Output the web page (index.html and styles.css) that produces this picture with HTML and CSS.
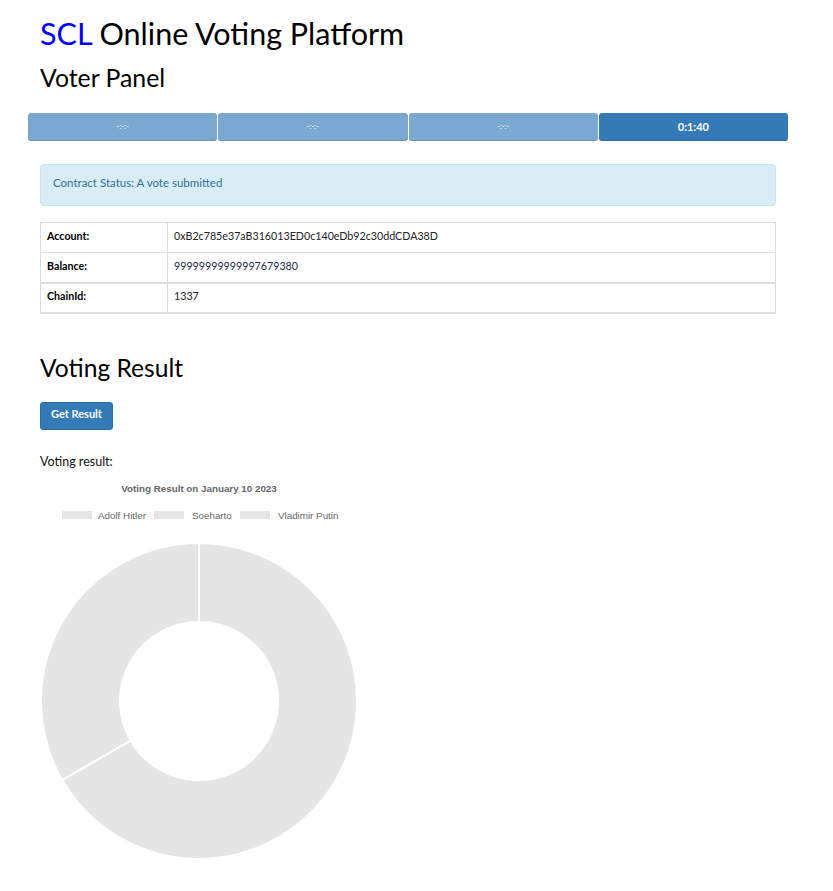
FILE: index.html
```html
<!DOCTYPE html>
<html>
<head>
<meta charset="utf-8">
<link rel="stylesheet" href="styles.css">
</head>
<body>
<div class="container">
  <h1 class="title"><span class="brand">SCL</span> Online Voting Platform</h1>
  <h2 class="subtitle">Voter Panel</h2>

  <div class="progress">
    <div class="seg light">-:-:-</div>
    <div class="seg light">-:-:-</div>
    <div class="seg light">-:-:-</div>
    <div class="seg dark">0:1:40</div>
  </div>

  <div class="alert">Contract Status: A vote submitted</div>

  <table class="info">
    <tbody>
      <tr><th>Account:</th><td>0xB2c785e37aB316013ED0c140eDb92c30ddCDA38D</td></tr>
      <tr><th>Balance:</th><td class="navy">99999999999997679380</td></tr>
    </tbody>
    <tbody class="second">
      <tr><th>ChainId:</th><td>1337</td></tr>
    </tbody>
  </table>

  <h2 class="section">Voting Result</h2>
  <button class="btn">Get Result</button>
  <p class="label">Voting result:</p>

  <svg class="chart" width="318" height="400" viewBox="0 0 318 400">
    <text x="159" y="13" class="ctitle" text-anchor="middle">Voting Result on January 10 2023</text>
    <rect x="22" y="32" width="30" height="8" class="box"/>
    <text x="58" y="39.5" class="ltext">Adolf Hitler</text>
    <rect x="114" y="32" width="30" height="8" class="box"/>
    <text x="152" y="39.5" class="ltext">Soeharto</text>
    <rect x="200" y="32" width="30" height="8" class="box"/>
    <text x="238" y="39.5" class="ltext">Vladimir Putin</text>
    <path class="slice" d="M159 64 A158 158 0 1 1 22.2 301 L90.6 261.5 A79 79 0 1 0 159 143 Z"/>
    <path class="slice" d="M22.2 301 A158 158 0 0 1 159 64 L159 143 A79 79 0 0 0 90.6 261.5 Z"/>
  </svg>
</div>
</body>
</html>
```

FILE: styles.css
```css
html, body {
  margin: 0;
  padding: 0;
  background: #fff;
}
body {
  font-family: Lato, "Open Sans", sans-serif;
  color: #111;
}
.container {
  width: 736px;
  margin-left: 40px;
}
.title {
  font-weight: 400;
  font-size: 30.5px;
  line-height: 36px;
  margin: 15px 0 0 0;
  color: #000;
}
.brand {
  color: #0000ff;
}
.subtitle {
  font-weight: 400;
  font-size: 24.8px;
  line-height: 30px;
  margin: 12px 0 0 0;
  color: #000;
}
.progress {
  display: flex;
  margin: 20px -12px 0 -12px;
  height: 28px;
}
.seg {
  flex: 1;
  display: flex;
  align-items: center;
  justify-content: center;
  color: #fff;
  font-size: 11px;
  border-radius: 3px;
  box-shadow: inset 0 -1px 0 rgba(0,0,0,0.12);
  margin-right: 1px;
  padding-bottom: 2px;
  box-sizing: border-box;
}
.seg:last-child { margin-right: 0; }
.light {
  background: #7ba8d0;
  font-size: 8px;
}
.dark {
  background: #337ab7;
  font-weight: 700;
}
.alert {
  margin-top: 23px;
  background: #d9edf7;
  border: 1px solid #bce8f1;
  border-radius: 4px;
  color: #31708f;
  font-size: 11.5px;
  padding: 11px 12px 15px 12px;
  line-height: 14px;
}
.info {
  margin-top: 16px;
  width: 100%;
  border-collapse: collapse;
  border: 1px solid #ddd;
  border-bottom-width: 2px;
  font-size: 10.7px;
}
.info th, .info td {
  border: 1px solid #ddd;
  height: 30px;
  padding: 0 6px 4px 6px;
  box-sizing: border-box;
  text-align: left;
}
.info th {
  width: 127px;
  font-weight: 700;
  color: #000;
}
.info td { color: #222; }
.info td.navy { color: #1b2a48; }
.info .second tr th, .info .second tr td {
  border-top: 2px solid #ddd;
}
.section {
  font-weight: 400;
  font-size: 24.6px;
  line-height: 30px;
  margin: 39px 0 0 0;
  color: #000;
}
.btn {
  display: block;
  margin-top: 19px;
  background: #337ab7;
  border: 1px solid #2e6da4;
  border-radius: 3px;
  color: #fff;
  font-family: Lato, sans-serif;
  font-weight: 700;
  font-size: 11px;
  height: 28px;
  padding: 0 10px 4px 10px;
}
.label {
  margin: 24px 0 0 0;
  font-size: 12.5px;
  line-height: 16px;
}
.chart {
  display: block;
  margin-top: 9px;
}
.ctitle {
  font-family: "Liberation Sans", Arial, sans-serif;
  font-weight: 700;
  font-size: 9.8px;
  fill: #666;
}
.ltext {
  font-family: "Liberation Sans", Arial, sans-serif;
  font-size: 9.8px;
  fill: #666;
}
.box { fill: #e5e5e5; }
.slice {
  fill: #e5e5e5;
  stroke: #fff;
  stroke-width: 2;
}
```
